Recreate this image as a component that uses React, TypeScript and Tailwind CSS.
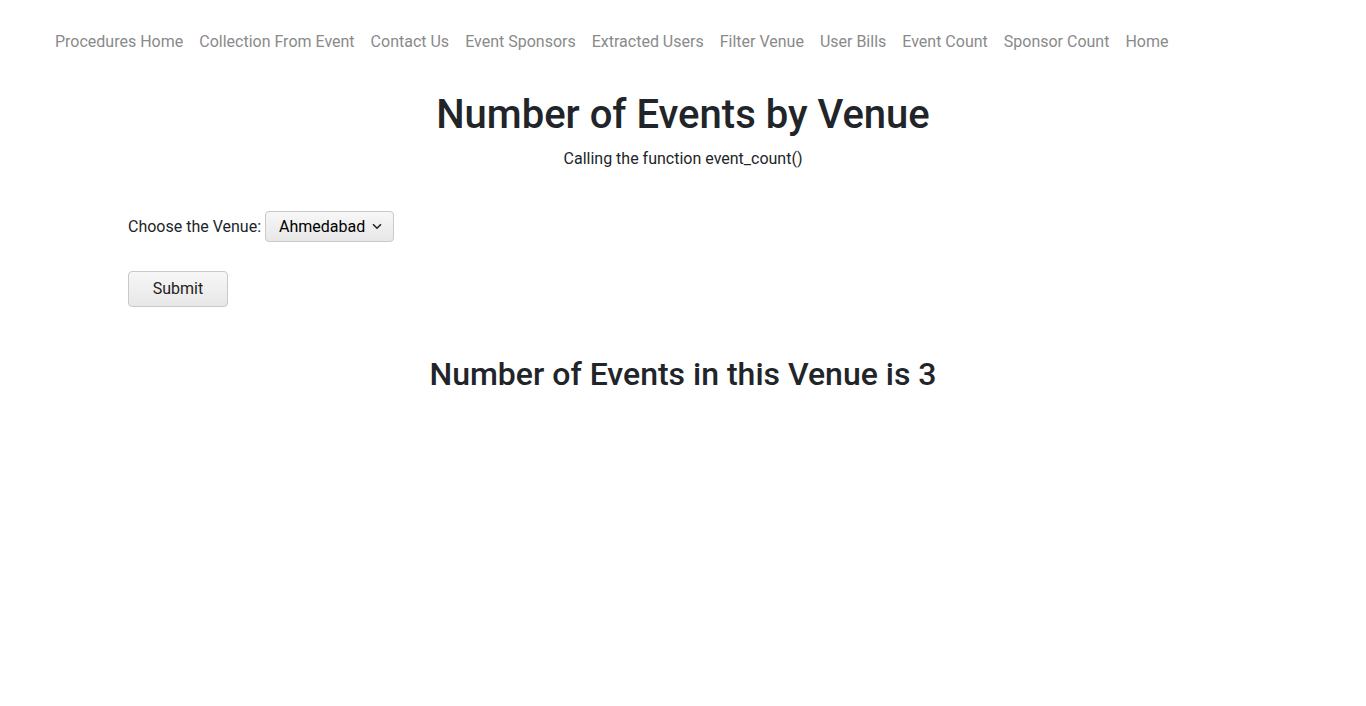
import React from 'react';

const NAV_LINKS = [
  'Procedures Home',
  'Collection From Event',
  'Contact Us',
  'Event Sponsors',
  'Extracted Users',
  'Filter Venue',
  'User Bills',
  'Event Count',
  'Sponsor Count',
  'Home',
];

const VENUES = ['Ahmedabad', 'Mumbai', 'Delhi', 'Bangalore', 'Chennai'];

const App: React.FC = () => {
  const [venue, setVenue] = React.useState('Ahmedabad');

  return (
    <div className="min-h-screen bg-white text-[#212529]" style={{ fontFamily: 'Roboto, "Liberation Sans", sans-serif' }}>
      {/* Navbar */}
      <nav className="pl-[47px] pt-[30px]">
        <ul className="flex items-center">
          {NAV_LINKS.map((link) => (
            <li key={link}>
              <a href="#" className="block px-2 text-base leading-6 text-[#8a8a8a] hover:text-[#555]">
                {link}
              </a>
            </li>
          ))}
        </ul>
      </nav>

      <div className="mt-[37px] text-center">
        <h1 className="text-[40px] font-medium leading-[48px] mb-2">Number of Events by Venue</h1>
        <p className="text-base leading-6">Calling the function event_count()</p>
      </div>

      {/* Form */}
      <form className="pl-[128px] mt-[40px]" onSubmit={(e) => e.preventDefault()}>
        <div className="flex items-center">
          <label htmlFor="venue" className="text-base leading-6 mr-[4px]">Choose the Venue:</label>
          <div className="relative">
            <select
              id="venue"
              value={venue}
              onChange={(e) => setVenue(e.target.value)}
              className="appearance-none w-[129px] h-[31px] pl-[13px] pr-6 rounded-[4px] border border-[#c9c9c9] bg-gradient-to-b from-[#f7f7f7] to-[#e7e7e7] text-base text-black outline-none"
            >
              {VENUES.map((v) => (
                <option key={v} value={v}>{v}</option>
              ))}
            </select>
            <svg
              className="pointer-events-none absolute right-[12px] top-[12px]"
              width="10"
              height="7"
              viewBox="0 0 10 7"
              fill="none"
            >
              <path d="M1 1.2L5 5.2L9 1.2" stroke="#222" strokeWidth="1.6" />
            </svg>
          </div>
        </div>

        <button
          type="submit"
          className="mt-[29px] w-[100px] h-[36px] rounded-[4px] border border-[#c9c9c9] bg-gradient-to-b from-[#f7f7f7] to-[#e7e7e7] text-base text-[#222]"
        >
          Submit
        </button>
      </form>

      <h2 className="mt-[48px] text-center text-[32px] font-medium leading-[38px]">
        Number of Events in this Venue is 3
      </h2>
    </div>
  );
};

export default App;
